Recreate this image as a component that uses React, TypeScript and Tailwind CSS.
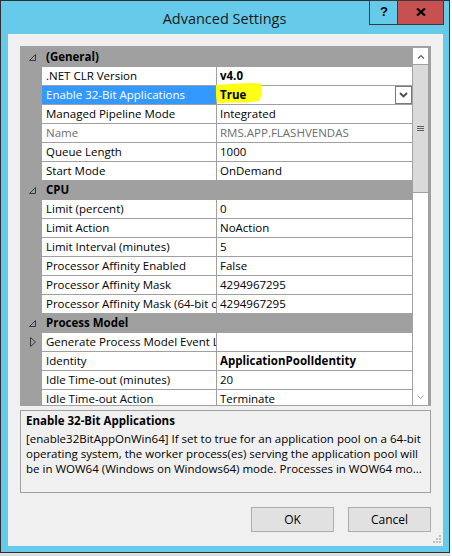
import React from 'react';

type Row =
    | { kind: 'cat'; label: string }
    | {
          kind: 'prop';
          name: string;
          value: string;
          bold?: boolean;
          disabled?: boolean;
          selected?: boolean;
          expander?: boolean;
      };

const rows: Row[] = [
    { kind: 'cat', label: '(General)' },
    { kind: 'prop', name: '.NET CLR Version', value: 'v4.0', bold: true },
    { kind: 'prop', name: 'Enable 32-Bit Applications', value: 'True', bold: true, selected: true },
    { kind: 'prop', name: 'Managed Pipeline Mode', value: 'Integrated' },
    { kind: 'prop', name: 'Name', value: 'RMS.APP.FLASHVENDAS', disabled: true },
    { kind: 'prop', name: 'Queue Length', value: '1000' },
    { kind: 'prop', name: 'Start Mode', value: 'OnDemand' },
    { kind: 'cat', label: 'CPU' },
    { kind: 'prop', name: 'Limit (percent)', value: '0' },
    { kind: 'prop', name: 'Limit Action', value: 'NoAction' },
    { kind: 'prop', name: 'Limit Interval (minutes)', value: '5' },
    { kind: 'prop', name: 'Processor Affinity Enabled', value: 'False' },
    { kind: 'prop', name: 'Processor Affinity Mask', value: '4294967295' },
    { kind: 'prop', name: 'Processor Affinity Mask (64-bit option)', value: '4294967295' },
    { kind: 'cat', label: 'Process Model' },
    { kind: 'prop', name: 'Generate Process Model Event Log Entry', value: '', expander: true },
    { kind: 'prop', name: 'Identity', value: 'ApplicationPoolIdentity', bold: true },
    { kind: 'prop', name: 'Idle Time-out (minutes)', value: '20' },
    { kind: 'prop', name: 'Idle Time-out Action', value: 'Terminate' },
];

// collapse glyph shown next to a category
const CollapseGlyph = () => (
    <svg width="7" height="7" viewBox="0 0 7 7">
        <path d="M0.5 6.5 L6.5 0.5 L6.5 6.5 Z" fill="none" stroke="#3a3a3a" strokeWidth="1" />
    </svg>
);

const ExpandGlyph = () => (
    <svg width="6" height="10" viewBox="0 0 6 10">
        <path d="M0.5 0.5 L5.5 5 L0.5 9.5 Z" fill="none" stroke="#3a3a3a" strokeWidth="1" />
    </svg>
);

const CategoryRow: React.FC<{ label: string }> = ({ label }) => (
    <div className="flex h-[18px] shrink-0 items-center">
        <div className="flex w-[21px] shrink-0 items-center pl-[8px]">
            <CollapseGlyph />
        </div>
        <div className="pl-1 font-bold leading-[18px] text-black">{label}</div>
    </div>
);

const PropRow: React.FC<{ row: Extract<Row, { kind: 'prop' }> }> = ({ row }) => (
    <div className="flex h-[18px] shrink-0">
        <div className="flex w-[21px] shrink-0 items-center pl-[9px]">{row.expander && <ExpandGlyph />}</div>
        <div
            className={`w-[174px] shrink-0 overflow-hidden whitespace-nowrap pl-1 leading-[18px] ${
                row.selected ? 'bg-[#3399ff] text-white' : row.disabled ? 'bg-white text-[#6d6d6d]' : 'bg-white text-black'
            }`}
        >
            {row.name}
        </div>
        <div
            className={`relative ml-px flex flex-1 items-center overflow-visible whitespace-nowrap bg-white pl-[3px] leading-[18px] ${
                row.disabled ? 'text-[#6d6d6d]' : 'text-black'
            } ${row.bold ? 'font-bold' : ''}`}
        >
            {row.selected && (
                // highlighter mark drawn over the screenshot
                <svg className="absolute left-[-2px] top-[-4px]" width="48" height="22" viewBox="0 0 48 22">
                    <path
                        d="M1 3 Q12 2 24 1.5 Q38 0.5 46 2 L47 9 Q46 16 44 19 Q30 21 16 20.5 Q6 21 2 21.5 Q0.5 12 1 3 Z"
                        fill="#ffff14"
                    />
                </svg>
            )}
            <span className="relative">{row.value}</span>
            {row.selected && (
                <div className="ml-auto flex h-[18px] w-[17px] items-center justify-center border border-[#7a7a7a] bg-white">
                    <svg width="9" height="6" viewBox="0 0 9 6">
                        <path d="M1 1 L4.5 4.5 L8 1" fill="none" stroke="#4a4a4a" strokeWidth="1.8" />
                    </svg>
                </div>
            )}
        </div>
    </div>
);

const Scrollbar = () => (
    <div className="flex w-[17px] shrink-0 flex-col gap-px px-px pt-px">
        <div className="flex h-[16px] shrink-0 items-center justify-center bg-white">
            <svg width="8" height="5" viewBox="0 0 8 5">
                <path d="M1 4.5 L4 1.5 L7 4.5" fill="none" stroke="#606060" strokeWidth="1.2" />
            </svg>
        </div>
        <div className="flex h-[127px] shrink-0 items-center justify-center bg-[#dadada]">
            <div className="flex w-[7px] flex-col gap-px">
                <div className="h-px bg-[#606060]" />
                <div className="h-px bg-[#606060]" />
                <div className="h-px bg-[#606060]" />
            </div>
        </div>
        <div className="flex flex-1 flex-col justify-end bg-white pb-[6px]">
            <div className="flex justify-center">
                <svg width="7" height="4" viewBox="0 0 7 4">
                    <path d="M0.5 0.5 L3.5 3.5 L6.5 0.5" fill="none" stroke="#9a9a9a" strokeWidth="1" />
                </svg>
            </div>
        </div>
    </div>
);

export default function App() {
    return (
        <div className="flex h-[556px] w-[452px] flex-col bg-white font-['Open_Sans',sans-serif] text-[11.5px]">
            {/* Window */}
            <div className="relative flex h-[553px] w-[450px] shrink-0 flex-col border border-[#2f2f2f] bg-[#66cbea] pl-[7px] pr-[6px] pb-[6px]">
                {/* Title bar */}
                <div className="flex h-[33px] shrink-0 items-center justify-center pr-[-7px] pt-[2px] text-[14.5px] text-[#1a1a1a]">
                    <span className="ml-[-2px]">Advanced Settings</span>
                </div>
                <div className="absolute right-[5px] top-[-1px] flex">
                    <div className="flex h-[25px] w-[28px] items-center justify-center border border-r-0 border-[#3a3a3a] bg-[#66cbea] pb-[2px] pl-px font-['Liberation_Sans',sans-serif] text-[13px] font-bold text-black">
                        ?
                    </div>
                    <div className="flex h-[25px] w-[47px] items-center justify-center border border-[#3a3a3a] bg-[#c75050] pb-[2px]">
                        <svg width="10" height="8" viewBox="0 0 10 8">
                            <path d="M1 0.5 L9 7.5 M9 0.5 L1 7.5" stroke="#000" strokeWidth="2.2" />
                        </svg>
                    </div>
                </div>

                {/* Client area */}
                <div className="relative flex flex-1 flex-col bg-[#f0f0f0] px-[12px] pt-[12px]">
                    {/* Property grid */}
                    <div className="flex h-[360px] shrink-0 border border-[#a0a0a0] bg-[#a0a0a0]">
                        <div className="flex h-[358px] w-[391px] shrink-0 flex-col gap-px overflow-hidden pt-px">
                            {rows.map((r, i) =>
                                r.kind === 'cat' ? <CategoryRow key={i} label={r.label} /> : <PropRow key={i} row={r} />
                            )}
                        </div>
                        <Scrollbar />
                    </div>

                    {/* Description */}
                    <div className="mt-[4px] h-[83px] shrink-0 border border-[#a0a0a0] px-[5px] pt-[2px] text-black">
                        <div className="font-bold leading-[16px]">Enable 32-Bit Applications</div>
                        <div className="mt-[2px] leading-[15px]">
                            <div className="whitespace-nowrap">[enable32BitAppOnWin64] If set to true for an application pool on a 64-bit</div>
                            <div className="whitespace-nowrap">operating system, the worker process(es) serving the application pool will</div>
                            <div className="whitespace-nowrap">be in WOW64 (Windows on Windows64) mode. Processes in WOW64 mo...</div>
                        </div>
                    </div>

                    {/* Buttons */}
                    <div className="mt-[14px] flex justify-end gap-[14px]">
                        <button className="h-[25px] w-[83px] border border-[#adadad] bg-[#e1e1e1] text-[12px] text-black">OK</button>
                        <button className="h-[25px] w-[83px] border border-[#adadad] bg-[#e1e1e1] text-[12px] text-black">Cancel</button>
                    </div>

                    {/* Size grip */}
                    <svg className="absolute bottom-[3px] right-[2px]" width="8" height="8" viewBox="0 0 8 8">
                        <rect x="6" y="0" width="2" height="2" fill="#c0c0c0" />
                        <rect x="3" y="3" width="2" height="2" fill="#c0c0c0" />
                        <rect x="6" y="3" width="2" height="2" fill="#c0c0c0" />
                        <rect x="0" y="6" width="2" height="2" fill="#c0c0c0" />
                        <rect x="3" y="6" width="2" height="2" fill="#c0c0c0" />
                        <rect x="6" y="6" width="2" height="2" fill="#c0c0c0" />
                    </svg>
                </div>
            </div>
            <div className="h-[3px] w-[450px] bg-[#dcdcdc]" />
        </div>
    );
}
